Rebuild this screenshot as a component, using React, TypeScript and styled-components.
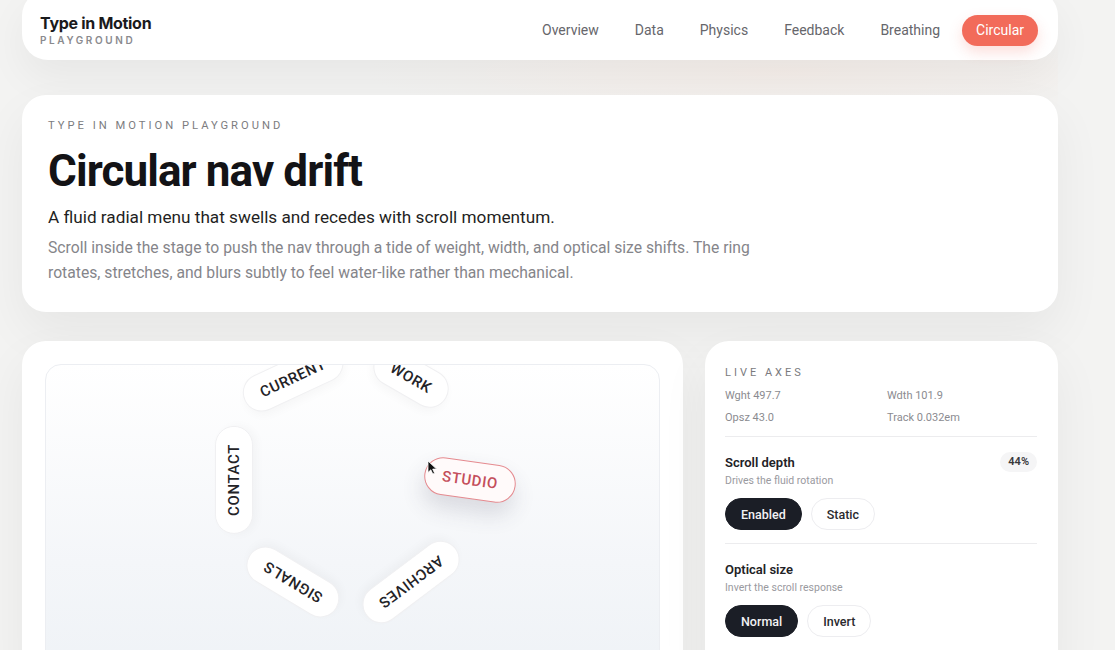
import React from "react";
import styled, { createGlobalStyle } from "styled-components";

const GlobalStyle = createGlobalStyle`
  html, body {
    margin: 0;
    padding: 0;
    background: #f3f3f2;
    font-family: Roboto, "Liberation Sans", sans-serif;
    color: #1b1b1f;
    overflow: hidden;
  }
  * { box-sizing: border-box; }
`;

const Page = styled.div`
  width: 1036px;
  margin-left: 22px;
  display: flex;
  flex-direction: column;
  background: radial-gradient(ellipse 420px 50px at 760px 72px, rgba(255, 205, 180, 0.14), transparent);
`;

const Header = styled.header`
  flex-shrink: 0;
  margin-top: -10px;
  height: 70px;
  padding: 10px 20px 0 18px;
  background: #fff;
  border-radius: 26px;
  box-shadow: 0 18px 40px rgba(0, 0, 0, 0.05);
  display: flex;
  align-items: center;
  justify-content: space-between;
`;

const Brand = styled.div`
  display: flex;
  flex-direction: column;
  gap: 2px;
`;

const BrandName = styled.span`
  font-family: Inter, Roboto, sans-serif;
  font-weight: 700;
  font-size: 16px;
  letter-spacing: -0.3px;
  color: #1a1a1c;
  line-height: 18px;
`;

const BrandSub = styled.span`
  font-family: Inter, Roboto, sans-serif;
  font-size: 10px;
  font-weight: 600;
  letter-spacing: 2.6px;
  color: #8a8a8e;
  line-height: 13px;
`;

const Nav = styled.nav`
  display: flex;
  align-items: center;
  gap: 8px;
`;

const NavLink = styled.a<{ $active?: boolean }>`
  display: inline-flex;
  align-items: center;
  height: 31px;
  padding: 0 14px;
  border-radius: 16px;
  font-size: 14px;
  color: ${(p) => (p.$active ? "#fff" : "#66666b")};
  background: ${(p) => (p.$active ? "#f26b5a" : "transparent")};
  box-shadow: ${(p) => (p.$active ? "0 6px 14px rgba(242,107,90,0.22)" : "none")};
  cursor: pointer;
`;

const Card = styled.section`
  flex-shrink: 0;
  background: #fff;
  border-radius: 24px;
  box-shadow: 0 20px 50px rgba(0, 0, 0, 0.055);
`;

const Hero = styled(Card)`
  margin-top: 35px;
  padding: 24px 26px 27px;
`;

const Eyebrow = styled.div`
  font-size: 11.2px;
  line-height: 14px;
  letter-spacing: 3px;
  color: #7c7c80;
  text-transform: uppercase;
`;

const Title = styled.h1`
  margin: 14px 0 0;
  font-size: 44px;
  line-height: 48px;
  font-weight: 700;
  letter-spacing: -0.9px;
  color: #131316;
`;

const Lead = styled.p`
  margin: 10px 0 0;
  font-size: 17.2px;
  line-height: 24px;
  color: #1f1f23;
`;

const Body = styled.p`
  margin: 6px 0 0;
  max-width: 740px;
  font-size: 15.7px;
  line-height: 25px;
  color: #85858a;
`;

const Row = styled.div`
  flex-shrink: 0;
  margin-top: 29px;
  display: grid;
  grid-template-columns: 1fr 353px;
  gap: 22px;
`;

const StageCard = styled(Card)`
  padding: 23px;
  height: 340px;
`;

const Stage = styled.div`
  position: relative;
  height: 330px;
  border: 1px solid #eceef2;
  border-radius: 16px;
  overflow: hidden;
  background: linear-gradient(180deg, #ffffff 0%, #f4f6f9 60%, #eef2f6 100%);
`;

const Pill = styled.div<{ $active?: boolean }>`
  position: absolute;
  height: 38px;
  padding: 0 17px;
  display: flex;
  align-items: center;
  white-space: nowrap;
  border-radius: 19px;
  font-size: 15px;
  font-weight: 500;
  letter-spacing: 0.6px;
  color: ${(p) => (p.$active ? "#c44e5b" : "#232327")};
  background: ${(p) => (p.$active ? "#fffafa" : "#ffffff")};
  border: ${(p) => (p.$active ? "1.5px solid #e58a8f" : "1px solid #f0f0f2")};
  box-shadow: ${(p) =>
    p.$active ? "0 12px 22px rgba(60, 60, 90, 0.16)" : "0 4px 10px rgba(0, 0, 0, 0.03)"};
`;

const Cursor = styled.svg`
  position: absolute;
  left: 381px;
  top: 95px;
  width: 11px;
  height: 15px;
`;

const Side = styled(Card)`
  padding: 25px 21px 0 20px;
  height: 340px;
`;

const SideLabel = styled.div`
  font-size: 11px;
  letter-spacing: 3px;
  color: #7a7a7e;
  line-height: 14px;
`;

const Axes = styled.div`
  margin-top: 5px;
  display: grid;
  grid-template-columns: 162px 1fr;
  font-size: 11px;
  line-height: 22px;
  color: #8b8b90;
  padding-bottom: 7px;
  border-bottom: 1px solid #ececee;
`;

const Control = styled.div`
  padding: 17px 0 13px;
  border-bottom: 1px solid #ececee;
`;

const ControlHead = styled.div`
  display: flex;
  justify-content: space-between;
  align-items: flex-start;
`;

const ControlTitle = styled.div`
  font-size: 13px;
  font-weight: 600;
  line-height: 18px;
  color: #222226;
`;

const ControlHint = styled.div`
  font-size: 10.5px;
  line-height: 15px;
  color: #9a9aa0;
  margin-top: 1px;
`;

const Badge = styled.span`
  margin-top: -2px;
  height: 20px;
  padding: 0 8px;
  border-radius: 10px;
  background: #f5f5f6;
  font-size: 11px;
  font-weight: 600;
  line-height: 20px;
  color: #38383c;
`;

const Toggles = styled.div`
  margin-top: 10px;
  display: flex;
  gap: 9px;
`;

const Toggle = styled.button<{ $on?: boolean }>`
  height: 32px;
  padding: 0 15px;
  border-radius: 16px;
  font-family: Roboto, sans-serif;
  font-size: 12.5px;
  font-weight: 500;
  color: ${(p) => (p.$on ? "#f2f2f4" : "#2a2a2e")};
  background: ${(p) => (p.$on ? "#1b1e26" : "#fff")};
  border: 1px solid ${(p) => (p.$on ? "#1b1e26" : "#ededf0")};
  cursor: pointer;
`;

const CX = 306;
const CY = 115;
const R = 118;

const items = [
  { label: "STUDIO", angle: 0, rot: 8, active: true },
  { label: "ARCHIVES", angle: 60, rot: 143 },
  { label: "SIGNALS", angle: 120, rot: 211 },
  { label: "CONTACT", angle: 180, rot: 270 },
  { label: "CURRENT", angle: 240, rot: 335 },
  { label: "WORK", angle: 300, rot: 390 },
];

export default function App() {
  return (
    <>
      <GlobalStyle />
      <Page>
        <Header>
          <Brand>
            <BrandName>Type in Motion</BrandName>
            <BrandSub>PLAYGROUND</BrandSub>
          </Brand>
          <Nav>
            <NavLink>Overview</NavLink>
            <NavLink>Data</NavLink>
            <NavLink>Physics</NavLink>
            <NavLink>Feedback</NavLink>
            <NavLink>Breathing</NavLink>
            <NavLink $active>Circular</NavLink>
          </Nav>
        </Header>

        <Hero>
          <Eyebrow>Type in Motion Playground</Eyebrow>
          <Title>Circular nav drift</Title>
          <Lead>A fluid radial menu that swells and recedes with scroll momentum.</Lead>
          <Body>
            Scroll inside the stage to push the nav through a tide of weight, width, and optical
            size shifts. The ring rotates, stretches, and blurs subtly to feel water-like rather
            than mechanical.
          </Body>
        </Hero>

        <Row>
          <StageCard>
            <Stage>
              {items.map((it) => {
                const a = (it.angle * Math.PI) / 180;
                return (
                  <Pill
                    key={it.label}
                    $active={it.active}
                    style={{
                      left: CX + R * Math.cos(a),
                      top: CY + R * Math.sin(a),
                      transform: `translate(-50%, -50%) rotate(${it.rot}deg)`,
                    }}
                  >
                    {it.label}
                  </Pill>
                );
              })}
              <Cursor viewBox="0 0 11 15">
                <path d="M1 1 L1 12.5 L3.8 9.8 L5.8 14 L7.6 13.2 L5.7 9.1 L9.6 9.1 Z" fill="#111" stroke="#fff" strokeWidth="0.8" />
              </Cursor>
            </Stage>
          </StageCard>

          <Side>
            <SideLabel>LIVE AXES</SideLabel>
            <Axes>
              <span>Wght 497.7</span>
              <span>Wdth 101.9</span>
              <span>Opsz 43.0</span>
              <span>Track 0.032em</span>
            </Axes>
            <Control>
              <ControlHead>
                <div>
                  <ControlTitle>Scroll depth</ControlTitle>
                  <ControlHint>Drives the fluid rotation</ControlHint>
                </div>
                <Badge>44%</Badge>
              </ControlHead>
              <Toggles>
                <Toggle $on>Enabled</Toggle>
                <Toggle>Static</Toggle>
              </Toggles>
            </Control>
            <Control>
              <ControlHead>
                <div>
                  <ControlTitle>Optical size</ControlTitle>
                  <ControlHint>Invert the scroll response</ControlHint>
                </div>
              </ControlHead>
              <Toggles>
                <Toggle $on>Normal</Toggle>
                <Toggle>Invert</Toggle>
              </Toggles>
            </Control>
          </Side>
        </Row>
      </Page>
    </>
  );
}
